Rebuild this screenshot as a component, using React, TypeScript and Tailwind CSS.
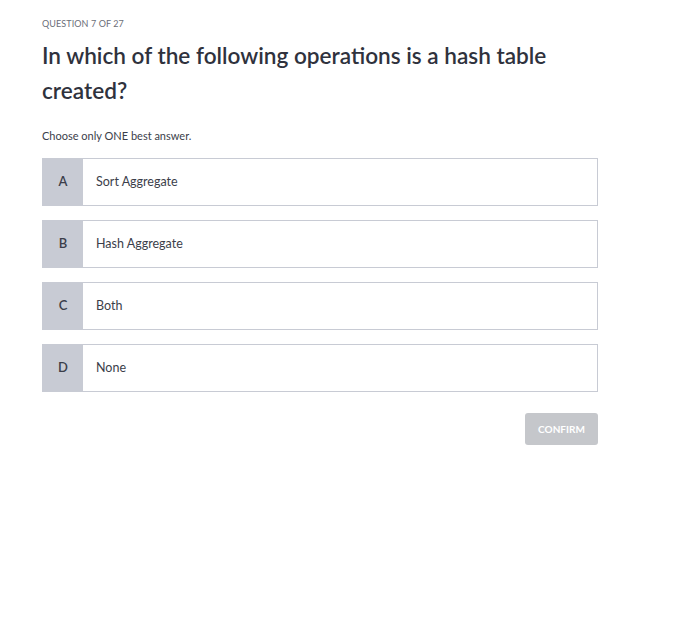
import React, { useState } from "react";

const options = [
  { key: "A", label: "Sort Aggregate" },
  { key: "B", label: "Hash Aggregate" },
  { key: "C", label: "Both" },
  { key: "D", label: "None" },
];

export default function App() {
  const [selected, setSelected] = useState<string | null>(null);

  return (
    <div className="min-h-screen bg-white font-['Lato','Noto_Sans',sans-serif] text-[#3b3e4a]">
      <div className="w-[556px] ml-[42px] pt-[18px]">
        <div className="text-[9px] leading-[12px] text-[#6b6e78] tracking-[0.01em]">QUESTION 7 OF 27</div>
        <h1 className="mt-[8px] text-[22.6px] leading-[35px] font-semibold text-[#2f323d]">
          In which of the following operations is a hash table created?
        </h1>
        <p className="mt-[21px] text-[11px] leading-[14px] text-[#3b3e4a]">Choose only ONE best answer.</p>

        <div className="mt-[15px] flex flex-col gap-[14px]">
          {options.map((o) => (
            <button
              key={o.key}
              onClick={() => setSelected(o.key)}
              className={`flex h-[48px] w-full items-stretch border text-left ${
                selected === o.key ? "border-[#8a8fa0]" : "border-[#c8cbd4]"
              }`}
            >
              <span className="flex w-[40px] items-center justify-center bg-[#c8cbd4] text-[13px] font-semibold text-[#3b3e4a]">
                {o.key}
              </span>
              <span className="flex items-center pl-[13px] text-[12.5px] text-[#3b3e4a]">{o.label}</span>
            </button>
          ))}
        </div>

        <div className="mt-[21px] flex justify-end">
          <button className="h-[32px] w-[73px] rounded-[3px] bg-[#c5c7cb] text-[10px] font-bold text-white">
            CONFIRM
          </button>
        </div>
      </div>
    </div>
  );
}
